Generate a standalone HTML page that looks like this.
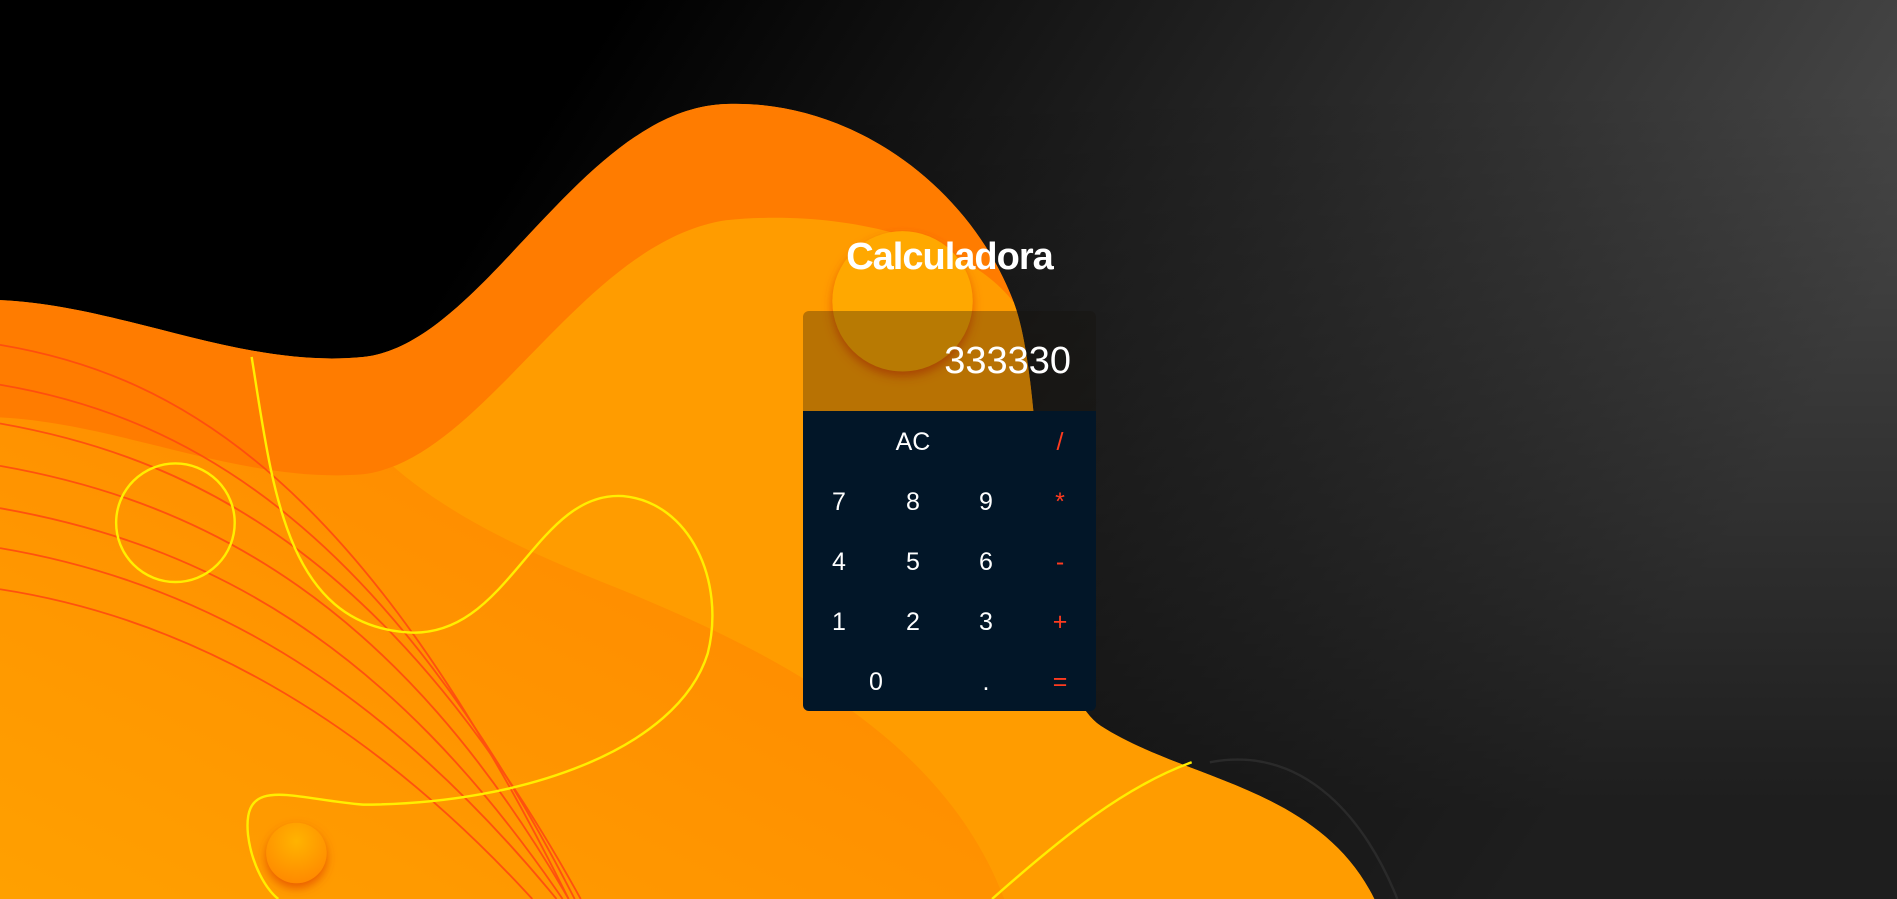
<!DOCTYPE html>
<html><head><meta charset="utf-8"><style>
html,body{margin:0;padding:0;width:1897px;height:899px;overflow:hidden;background:#000}
svg.bg{position:absolute;left:0;top:0;width:1897px;height:899px}
.title{position:absolute;left:803px;width:293px;top:236px;text-align:center;color:#fff;font:bold 38px "Liberation Sans",sans-serif;letter-spacing:-1px}
.calc{position:absolute;left:803px;top:311px;width:293px;height:400px;border-radius:6px;overflow:hidden;font-family:"Liberation Sans",sans-serif}
.disp{height:100px;background:rgba(20,15,10,0.3);color:#fff;font-size:38px;text-align:right;padding-right:25px;box-sizing:border-box;line-height:100px}
.pad{height:300px;background:#021628;position:relative;color:#fff;font-size:25px}
.k{position:absolute;width:60px;margin-left:-30px;text-align:center;line-height:30px;height:30px}
.o{color:#ff3b1f}
</style></head><body>
<svg class="bg" viewBox="0 0 1568 743" preserveAspectRatio="none">
<defs>
<linearGradient id="bgg" x1="0" y1="0" x2="1" y2="0.3">
<stop offset="0.3" stop-color="#000"/><stop offset="1" stop-color="#4a4a4a"/></linearGradient>
<linearGradient id="bgd" x1="0" y1="0" x2="0" y2="1">
<stop offset="0.1" stop-color="#000" stop-opacity="0"/><stop offset="0.9" stop-color="#000" stop-opacity="0.6"/></linearGradient>
<linearGradient id="base" x1="0.6" y1="0.3" x2="0" y2="1">
<stop offset="0" stop-color="#ff8500"/><stop offset="1" stop-color="#ffa000"/></linearGradient>
<radialGradient id="ball" cx="0.5" cy="0.3" r="0.7">
<stop offset="0" stop-color="#ffb300"/><stop offset="1" stop-color="#ff8a00"/></radialGradient>
<filter id="sh" x="-50%" y="-50%" width="200%" height="200%"><feDropShadow dx="0" dy="4" stdDeviation="4" flood-color="#e04000" flood-opacity="0.7"/></filter>
</defs>
<rect width="1568" height="743" fill="url(#bgg)"/>
<rect width="1568" height="743" fill="url(#bgd)"/>
<path d="M1000,630 C1080,615 1130,680 1155,743" fill="none" stroke="#2a2a2a" stroke-width="2"/>
<path d="M0,248 C100,252 200,305 300,295 C400,285 480,90 600,86 C700,82 800,150 838,250 C868,330 850,560 910,600 C980,645 1090,650 1136,743 L0,743 Z" fill="url(#base)"/>
<path d="M262,298 C300,400 420,450 520,490 C640,540 780,610 830,743 L1136,743 C1090,650 980,645 910,600 C850,560 868,330 838,250 C800,180 700,170 600,180 C500,190 400,320 262,298 Z" fill="#ff9c00"/>
<path d="M0,248 C100,252 200,305 300,295 C400,285 480,90 600,86 C700,82 800,150 838,250 C800,200 700,172 600,182 C480,200 400,380 300,392 C200,400 100,350 0,345 Z" fill="#ff7c00"/>
<g fill="none" stroke="#ff4a10" stroke-width="1.5" opacity="0.9">
<path d="M0,285 C150,310 300,400 470,743"/>
<path d="M0,318 C160,345 320,440 475,743"/>
<path d="M0,350 C170,380 330,470 480,743"/>
<path d="M0,385 C170,415 330,500 470,743"/>
<path d="M0,420 C170,450 320,530 465,743"/>
<path d="M0,453 C160,480 310,560 460,743"/>
<path d="M0,487 C150,510 300,590 440,743"/>
</g>
<g fill="none" stroke="#ffee00" stroke-width="2">
<path d="M208,295 C225,400 235,510 330,522 C420,535 440,405 515,410 C570,415 600,480 585,540 C560,620 430,665 300,665 C240,660 200,640 205,690 C208,715 220,735 230,743"/>
<circle cx="145" cy="432" r="49"/>
<path d="M820,743 C880,690 930,650 985,630"/>
</g>
<circle cx="746" cy="249" r="58" fill="#ffa800" filter="url(#sh)"/>
<circle cx="245" cy="705" r="25" fill="url(#ball)" filter="url(#sh)"/>
</svg>
<div class="title">Calculadora</div>
<div class="calc">
<div class="disp">333330</div>
<div class="pad">
<div class="k" style="left:110px;top:16px">AC</div>
<div class="k o" style="left:257px;top:16px">/</div>
<div class="k" style="left:36px;top:76px">7</div>
<div class="k" style="left:110px;top:76px">8</div>
<div class="k" style="left:183px;top:76px">9</div>
<div class="k o" style="left:257px;top:76px">*</div>
<div class="k" style="left:36px;top:136px">4</div>
<div class="k" style="left:110px;top:136px">5</div>
<div class="k" style="left:183px;top:136px">6</div>
<div class="k o" style="left:257px;top:136px">-</div>
<div class="k" style="left:36px;top:196px">1</div>
<div class="k" style="left:110px;top:196px">2</div>
<div class="k" style="left:183px;top:196px">3</div>
<div class="k o" style="left:257px;top:196px">+</div>
<div class="k" style="left:73px;top:256px">0</div>
<div class="k" style="left:183px;top:256px">.</div>
<div class="k o" style="left:257px;top:256px">=</div>
</div></div>
</body></html>
